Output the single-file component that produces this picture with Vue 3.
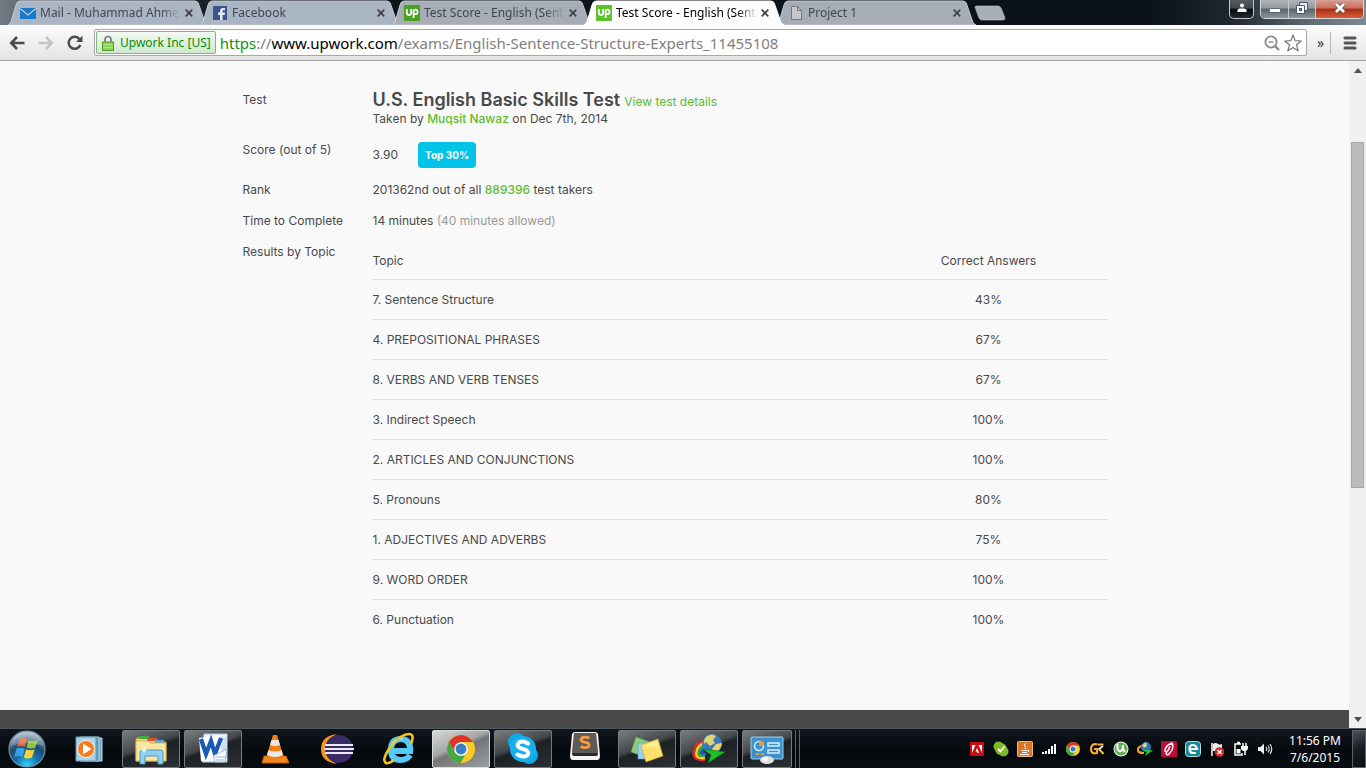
<script setup>
import { ref } from 'vue'

const tabs = [
  { title: 'Mail - Muhammad Ahmer', icon: 'mail', glow: true },
  { title: 'Facebook', icon: 'facebook', glow: true },
  { title: 'Test Score - English (Sent', icon: 'upwork' },
  { title: 'Test Score - English (Sent', icon: 'upwork', active: true },
  { title: 'Project 1', icon: 'page' }
]

const topics = ref([
  { name: '7. Sentence Structure', score: '43%' },
  { name: '4. PREPOSITIONAL PHRASES', score: '67%' },
  { name: '8. VERBS AND VERB TENSES', score: '67%' },
  { name: '3. Indirect Speech', score: '100%' },
  { name: '2. ARTICLES AND CONJUNCTIONS', score: '100%' },
  { name: '5. Pronouns', score: '80%' },
  { name: '1. ADJECTIVES AND ADVERBS', score: '75%' },
  { name: '9. WORD ORDER', score: '100%' },
  { name: '6. Punctuation', score: '100%' }
])
</script>

<template>
  <div class="screen">
    <header class="titlebar">
      <nav class="tabs" aria-label="Open tabs">
        <div v-for="(tab, i) in tabs" :key="i" class="tab" :class="{ active: tab.active, glow: tab.glow }">
          <svg class="tab-shape" viewBox="0 0 200 24" preserveAspectRatio="none" aria-hidden="true">
            <path d="M0 24C3 23 3 21 4 18L8 5Q9 1 13 1H186Q190 1 191 5L196 19Q197 23 200 24Z" />
          </svg>
          <svg v-if="tab.icon === 'mail'" class="favicon" viewBox="0 0 16 16" aria-hidden="true">
            <path fill="#1979ca" d="M0 3H16V14H0Z" /><path fill="none" stroke="#b9cde0" stroke-width="1.3" d="M0 3.5L8 10L16 3.5" />
          </svg>
          <svg v-else-if="tab.icon === 'facebook'" class="favicon" viewBox="0 0 16 16" aria-hidden="true">
            <rect x="1" y="1" width="14" height="14" fill="#3c5390" /><path fill="#e4e9f2" d="M8 15V10H6V7.500H8V6C8 4 9 3 11 3H13V5.300H11.500C10.800 5.300 10.600 5.600 10.600 6.200V7.500H13L12.700 10H10.600V15Z" />
          </svg>
          <svg v-else-if="tab.icon === 'upwork'" class="favicon" viewBox="0 0 16 16" aria-hidden="true">
            <rect width="16" height="16" :fill="tab.active ? '#5cc42b' : '#46a022'" />
            <path fill="none" stroke="#fff" stroke-width="1.800" d="M2.800 4V7.500Q2.800 10 5 10Q7.200 10 7.200 7.500V4M9.600 13V7Q9.600 4.700 11.500 4.700Q13.500 4.700 13.500 7Q13.500 9.200 11.500 9.200H9.600" />
          </svg>
          <svg v-else class="favicon" viewBox="0 0 16 16" aria-hidden="true">
            <path fill="#c6c8cb" stroke="#75787c" d="M3.500 1.500H9.500L13.500 5.500V14.500H3.500Z" /><path fill="none" stroke="#75787c" d="M9.500 1.500V5.500H13.500" />
          </svg>
          <span class="tab-title">{{ tab.title }}</span>
          <button class="tab-close" aria-label="Close tab">
            <svg viewBox="0 0 8 8" width="8" height="8"><path stroke="currentColor" stroke-width="1.800" d="M.7 .7L7.300 7.300M7.300 .7L.7 7.300" /></svg>
          </button>
        </div>
        <button class="new-tab" aria-label="New tab">
          <svg viewBox="0 0 32 16" width="32" height="16"><path fill="#a8afb8" stroke="#c4c9cf" stroke-width=".6" d="M1 2Q1 1 3 1H24Q26 1 27 3L31 13Q31 15 29 15H8Q6 15 5 13Z" /></svg>
        </button>
      </nav>
      <div class="window-tools">
        <button class="wb user" aria-label="User">
          <svg viewBox="0 0 10 10" width="10" height="10"><circle cx="5" cy="2.500" r="2" fill="#fff" /><path fill="#fff" d="M.5 9V7Q.5 5.500 3 5.500H7Q9.500 5.500 9.500 7V9Z" /></svg>
        </button>
        <div class="wb-group">
          <button class="wb min" aria-label="Minimize"><svg viewBox="0 0 12 12" width="12" height="12"><rect x=".5" y="6.500" width="11" height="4" rx="1" fill="#fff" stroke="#5d6370" /></svg></button>
          <button class="wb max" aria-label="Restore"><svg viewBox="0 0 12 12" width="12" height="12"><path fill="#eef0f2" stroke="#50566a" d="M3.500 .5H11.500V8.500H3.500Z" /><path fill="#fff" stroke="#50566a" d="M.5 3.500H8.500V11.500H.5Z" /><rect x="3.500" y="6.500" width="2" height="2" fill="#888" stroke="#50566a" /></svg></button>
          <button class="wb close" aria-label="Close"><svg viewBox="0 0 12 12" width="12" height="12"><path stroke="#5f4444" stroke-width="4.500" d="M2 2L10 10M10 2L2 10" /><path stroke="#fff" stroke-width="2.800" d="M2 2L10 10M10 2L2 10" /></svg></button>
        </div>
      </div>
    </header>

    <div class="toolbar">
      <button class="tool" aria-label="Back"><svg viewBox="0 0 16 14" width="16" height="14"><path fill="none" stroke="#4b4b4b" stroke-width="2.600" d="M8 1L2.200 7L8 13M2 7H15.500" /></svg></button>
      <button class="tool" aria-label="Forward"><svg viewBox="0 0 16 14" width="16" height="14"><path fill="none" stroke="#c4c4c4" stroke-width="2.600" d="M8 1L13.800 7L8 13M14 7H.5" /></svg></button>
      <button class="tool" aria-label="Reload"><svg viewBox="0 0 16 16" width="16" height="16"><path fill="none" stroke="#4b4b4b" stroke-width="2.500" d="M13.300 10A6 6 0 1 1 12.500 4.200" /><path fill="#4b4b4b" d="M15.500 .5V7H9Z" /></svg></button>
      <div class="omnibox">
        <button class="secure">
          <svg viewBox="0 0 12 16" width="12" height="16" aria-hidden="true"><path fill="none" stroke="#777" stroke-width="1.600" d="M3 8V4.500Q3 1.500 6 1.500Q9 1.500 9 4.500V8" /><rect x=".5" y="7" width="11" height="8.500" fill="#8bd556" stroke="#58972f" /><path stroke="#c1ef9c" d="M1.500 9.500H10.500M1.500 12.500H10.500" opacity=".6" /></svg>
          Upwork Inc [US]
        </button>
        <a class="url" href="#"><span class="scheme">https</span>://<span class="host">www.upwork.com</span>/exams/English-Sentence-Structure-Experts_11455108</a>
        <button class="inner-tool" aria-label="Zoom"><svg viewBox="0 0 16 16" width="16" height="16"><circle cx="7" cy="7" r="5.600" fill="none" stroke="#888" stroke-width="1.800" /><path stroke="#888" stroke-width="1.400" d="M4.500 7H9.500" /><path stroke="#888" stroke-width="2.400" d="M11 11L15 15" /></svg></button>
        <button class="inner-tool" aria-label="Bookmark"><svg viewBox="0 0 18 18" width="18" height="18"><path fill="#fff" stroke="#777" stroke-width="1.200" stroke-linejoin="round" d="M9 1L11.200 6.700L17.300 7L12.500 10.800L14.200 16.800L9 13.400L3.800 16.800L5.500 10.800L.7 7L6.800 6.700Z" /></svg></button>
      </div>
      <button class="more" aria-label="More">»</button>
      <button class="menu" aria-label="Menu"><svg viewBox="0 0 14 14" width="14" height="14"><path stroke="#555" stroke-width="3" stroke-linecap="round" d="M2 2H12M2 7H12M2 12H12" /></svg></button>
    </div>

    <div class="viewport">
      <div class="page">
        <main class="result">
          <dl class="facts">
            <dt>Test</dt>
            <dd>
              <div class="title-line"><h1>U.S. English Basic Skills Test</h1> <a href="#">View test details</a></div>
              <div>Taken by <a href="#" class="strong">Muqsit Nawaz</a> on Dec 7th, 2014</div>
            </dd>
            <dt>Score (out of 5)</dt>
            <dd class="score">3.90 <span class="badge">Top 30%</span></dd>
            <dt>Rank</dt>
            <dd>201362nd out of all <span class="green">889396</span> test takers</dd>
            <dt>Time to Complete</dt>
            <dd>14 minutes <span class="muted">(40 minutes allowed)</span></dd>
            <dt>Results by Topic</dt>
            <dd>
              <table>
                <thead><tr><th scope="col">Topic</th><th scope="col" class="num">Correct Answers</th></tr></thead>
                <tbody>
                  <tr v-for="t in topics" :key="t.name"><td>{{ t.name }}</td><td class="num">{{ t.score }}</td></tr>
                </tbody>
              </table>
            </dd>
          </dl>
        </main>
        <footer class="page-footer"></footer>
      </div>
      <div class="scrollbar" aria-hidden="true">
        <svg viewBox="0 0 8 5" width="8" height="5"><path fill="#505050" d="M0 5L4 0L8 5Z" /></svg>
        <div class="track"><div class="thumb"></div></div>
        <svg viewBox="0 0 8 5" width="8" height="5"><path fill="#505050" d="M0 0L4 5L8 0Z" /></svg>
      </div>
    </div>

    <footer class="taskbar">
      <button class="start" aria-label="Start">
        <svg viewBox="0 0 40 40" width="40" height="40">
          <defs>
            <radialGradient id="orb" cx=".5" cy=".95" r=".9"><stop offset="0" stop-color="#35d6fb" /><stop offset=".35" stop-color="#1474ae" /><stop offset=".65" stop-color="#1c4a70" /><stop offset="1" stop-color="#a5b9c6" /></radialGradient>
          </defs>
          <circle cx="20" cy="20" r="18" fill="url(#orb)" stroke="#6d8ea3" stroke-width="1.200" />
          <path fill="#ea6432" d="M13 10Q17 8 20 10L18 18Q14 16 10 18Z" /><path fill="#8fc43c" d="M21.500 11Q26 13 31 11L28 19Q24 20 19.500 18.500Z" />
          <path fill="#3b9fe0" d="M9.500 19.500Q14 18 17.600 20L15.500 28Q11 26 7.500 28Z" /><path fill="#fbd039" d="M19 20.500Q24 22 27.600 20.500L25 28.500Q20 30.500 16.800 28.500Z" />
          <path fill="#fff" opacity=".2" d="M4 17Q6 3 20 3Q34 3 36 17Q20 11 4 17Z" />
        </svg>
      </button>
      <button class="task" aria-label="Media Player">
        <svg viewBox="0 0 32 32" width="32" height="32"><path fill="#78abc9" stroke="#b4d9eb" d="M10 5H29V28H10Z" /><path fill="#6497b9" stroke="#a9d2e5" d="M7 4H26V28H7Z" /><path fill="#a8d3e8" stroke="#6698b5" d="M3 4H23V28H3Z" /><circle cx="13" cy="16" r="8.500" fill="#f5791d" stroke="#fff1df" /><path fill="#fff" d="M10 10.500L18.500 16L10 21.500Z" /></svg>
      </button>
      <button class="task open" aria-label="Explorer">
        <svg viewBox="0 0 34 34" width="34" height="34"><path fill="#f1d375" stroke="#b59137" d="M2 6H12L14 8H24L25 10H32V29H2Z" /><path fill="#3eae3d" d="M5 4H15V7H5Z" /><path fill="#d85335" d="M13 6H23V9H13Z" /><path fill="#4ca8e4" d="M21 8H30V11H21Z" /><path fill="#f8e7a2" stroke="#d7b75b" d="M2 9H14L16 11H32V29H2Z" /><path fill="#8ed0ed" stroke="#4b99c3" d="M6 20Q6 18 9 18H26Q29 18 29 20V32H24V24H11V32H6Z" /><path fill="#fff" d="M10 14L10.800 17.200L14 18L10.800 18.800L10 22L9.200 18.800L6 18L9.200 17.200Z" /></svg>
      </button>
      <button class="task open" aria-label="Word">
        <svg viewBox="0 0 34 34" width="34" height="34"><path fill="#ecf3fb" stroke="#b5cbe5" d="M8 2H31V30H6Z" /><path fill="#cfe0f2" d="M24 5H30V20H24Z" /><path fill="#fff" d="M3 6L25 3V28L5 29Z" /><path fill="none" stroke="#185ab4" stroke-width="4.200" d="M5 7L10 22L15 9L19 22L25 6" /><path fill="#f7faff" stroke="#9fb7d3" d="M17 24L31 17L29 30H19Z" /><path fill="none" stroke="#9fb7d3" d="M19 25H29M20 28H28" /></svg>
      </button>
      <button class="task" aria-label="VLC">
        <svg viewBox="0 0 32 32" width="32" height="32"><path fill="#f28a1b" stroke="#bd5b07" d="M5 23H27L30 30H3Z" /><path fill="#f47d12" d="M14 2H18L25 25Q16 29 7 25Z" /><path fill="#e9e9e9" d="M12.500 7H19.500L21 12Q16 14 11 12ZM9.500 17Q16 20 22.500 17L24 22Q16 26 8 22Z" /></svg>
      </button>
      <button class="task" aria-label="Eclipse">
        <svg viewBox="0 0 34 32" width="34" height="32"><path fill="#f7941e" d="M17 1Q1 3 1 16Q1 29 17 31Q6 26 6 16Q6 6 17 1Z" /><circle cx="19" cy="16" r="14" fill="#382b66" /><path fill="none" stroke="#e9e8f5" stroke-width="2.200" d="M5 12H33M4 16H34M5 20H33" /></svg>
      </button>
      <button class="task" aria-label="Internet Explorer">
        <svg viewBox="0 0 34 34" width="34" height="34"><path fill="none" stroke="#55c8f5" stroke-width="6" d="M31 19H11M28.500 19Q28 7 19 7Q9 7 9 18Q9 28 19 28Q25 28 28 23" /><path fill="none" stroke="#b7eefe" stroke-width="1.400" d="M10 12Q13 6 21 7" /><path fill="none" stroke="#f4c51a" stroke-width="2.600" d="M29 12Q33 2 27 2Q19 2 9 14Q-1 28 4 31Q7 32 12 28" /></svg>
      </button>
      <button class="task open current" aria-label="Chrome">
        <svg viewBox="0 0 32 32" width="32" height="32"><circle cx="16" cy="16" r="14" fill="#f9cb27" /><path fill="#d9372a" d="M3.900 9A14 14 0 0 1 28.100 9H16L10 19Z" /><path fill="#45a644" d="M3.900 9L10 19.500Q13 24 20 22.500L15.500 30A14 14 0 0 1 3.900 9Z" /><circle cx="16" cy="16" r="6.800" fill="#f2f4f5" /><circle cx="16" cy="16" r="5.400" fill="#377fc8" /></svg>
      </button>
      <button class="task open" aria-label="Skype">
        <svg viewBox="0 0 32 32" width="32" height="32"><circle cx="10" cy="9" r="9" fill="#0ea9e6" /><circle cx="22" cy="22" r="9" fill="#0ea9e6" /><circle cx="16" cy="16" r="13" fill="#16b1ec" /><path fill="none" stroke="#fff" stroke-width="4" stroke-linecap="round" d="M21 10.500Q16 7 12 9.500Q9 13 13 15L19 17Q23 20 20 22.500Q16 25 10.500 21.500" /></svg>
      </button>
      <button class="task" aria-label="Sublime Text">
        <svg class="sublime" viewBox="0 0 32 30" width="32" height="30"><path fill="#f3f3f3" d="M3 2Q4 0 6 0H26Q28 0 29 2L31 24Q31 28 28 28H4Q1 28 1 24Z" /><path fill="#2a2a2a" d="M4 18H28L29 22Q29 24 27 24H5Q3 24 3 22Z" /><path fill="#5d5a58" d="M5 1H27L29 19Q29 21 27 21H5Q3 21 3 19Z" /><path fill="none" stroke="#f89b41" stroke-width="2.800" d="M20.500 6Q13 3.500 12 7.500Q12 9.500 16 10.300Q21 11 20 14Q18 17 11.500 14.500" /></svg>
      </button>
      <button class="task open" aria-label="Sticky Notes">
        <svg viewBox="0 0 34 30" width="34" height="30"><path fill="#8dcc7d" stroke="#579a54" stroke-width=".6" d="M6 3L20 8L15 23L1 18Z" /><path fill="#9ccff1" stroke="#5b98c5" stroke-width=".6" d="M8 9H22V25H8Z" /><path fill="#fbe36b" stroke="#c7a737" stroke-width=".6" d="M11 11L28 5L33 22L16 28Z" /><path fill="#fff3a8" d="M13 12L27 7L29 13Z" opacity=".7" /></svg>
      </button>
      <button class="task open" aria-label="Download Manager">
        <svg viewBox="0 0 36 34" width="36" height="34"><g fill="none" stroke-width="2.600"><path stroke="#e4252a" d="M14 28Q1 29 3 19Q5 10 14 9" /><path stroke="#f5d32a" d="M14 26Q4 27 5.500 20Q7 12 15 11" /><path stroke="#2bac40" d="M14 24Q7 24 8 20Q9 15 16 13" /><path stroke="#225cd8" d="M15 22Q10 22 11 19L16 15" /></g><circle cx="21" cy="12" r="10" fill="#3978c1" /><path fill="#e3d36c" d="M16 4Q21 1 25 4L22 8L24 11L19 14L15 10L13 12Q12 8 16 4ZM25 12L31 11Q30 18 24 21L21 17Z" /><path fill="#1cc02b" stroke="#0a7213" stroke-width=".7" d="M12 17L34 20L17 31L20 23Z" /></svg>
      </button>
      <button class="task open stacked" aria-label="Control Panel">
        <svg viewBox="0 0 34 32" width="34" height="32"><rect x="1" y="4" width="32" height="22" rx="1" fill="#3c91cf" stroke="#a1d0ee" /><circle cx="9" cy="13" r="4.500" fill="none" stroke="#d6effd" stroke-width="1.500" /><path fill="#f59a29" d="M9 7Q14 7 14 13H9Z" /><path fill="none" stroke="#d6effd" stroke-width="1.500" d="M18 10H29V13H18ZM18 17H29V20H18Z" /><path fill="#f59a29" d="M6 20H9V22H6ZM11 20H14V22H11Z" /><ellipse cx="17" cy="27" rx="7" ry="4" fill="#dedfe0" /><ellipse cx="15" cy="26" rx="3" ry="2" fill="#fff" /></svg>
      </button>
      <span class="edge"></span><span class="edge"></span>

      <div class="tray">
        <svg viewBox="0 0 16 16"><rect x="1" y="1" width="14" height="14" fill="#c80d12" /><path fill="#fff" d="M3 4H6.500L3 12ZM9.500 4H13V12ZM8 7L10.200 12H8.700L8 10.500H6.500Z" /></svg>
        <svg viewBox="0 0 16 16"><circle cx="5.500" cy="5.500" r="5" fill="#7dba24" /><circle cx="10.500" cy="10.500" r="5" fill="#7dba24" /><circle cx="8" cy="8" r="6" fill="#7dba24" /><path fill="none" stroke="#fff" stroke-width="1.800" d="M5 8L7.500 10.500L11.500 5.500" /></svg>
        <svg viewBox="0 0 16 16"><rect x=".5" y=".5" width="15" height="15" rx="1" fill="#dd7421" stroke="#f6b87b" /><path fill="none" stroke="#fff" d="M9 2Q6 4 8 5.500Q9 6.500 8 8M4.500 9.500H10.500M11 9Q13 9.500 11 11M5 11.500H10M3 13.500H12" /></svg>
        <svg viewBox="0 0 16 16"><path stroke="#fff" stroke-width="2" d="M2 13V11M5 13V10M8 13V8M11 13V5M14 13V3" /></svg>
        <svg viewBox="0 0 32 32"><circle cx="16" cy="16" r="14" fill="#f9cb27" /><path fill="#d9372a" d="M3.900 9A14 14 0 0 1 28.100 9H16L10 19Z" /><path fill="#45a644" d="M3.900 9L10 19.500Q13 24 20 22.500L15.500 30A14 14 0 0 1 3.900 9Z" /><circle cx="16" cy="16" r="7" fill="#f2f4f5" /><circle cx="16" cy="16" r="5" fill="#377fc8" /></svg>
        <svg viewBox="0 0 16 16"><rect width="16" height="16" fill="#050505" /><path fill="none" stroke="#f2ad2c" stroke-width="2.200" d="M8.500 3.500Q2 2 2 8Q2 13.500 8 12V8H5" /><path fill="none" stroke="#f4b948" stroke-width="2" d="M9 3.500H14.500M10 8L14.500 13" /><path stroke="#f4f4f4" stroke-width="1.600" d="M14 5L9.500 8.500" /></svg>
        <svg viewBox="0 0 16 16"><circle cx="8" cy="8" r="7.500" fill="#edf7eb" /><circle cx="8" cy="8" r="6.500" fill="#63ae52" /><path fill="none" stroke="#fff" stroke-width="2" d="M4.500 3V7Q5 11 8 10Q10 9 10 4M10 8L12 11" /></svg>
        <svg viewBox="0 0 16 16"><path fill="none" stroke="#f1a023" stroke-width="2.200" d="M7 12Q0 12 1 8Q2 5 6 5" /><circle cx="9" cy="6" r="5" fill="#2e72b9" /><path fill="#e0d368" d="M5 4L9 1L10 5L7 7Z" /><path fill="#1fbf31" d="M5 8L16 9.500L8 15L9.500 11Z" /></svg>
        <svg viewBox="0 0 16 16"><rect width="16" height="16" rx="1" fill="#bf0b39" /><path fill="none" stroke="#fff" stroke-width="1.500" d="M4 11Q4 4 11 2Q14 7 8 13Q6 15 5 12Q8 9 9 5" /></svg>
        <svg viewBox="0 0 16 16"><rect x=".5" y=".5" width="15" height="15" rx="3" fill="#17899b" stroke="#b3d7dc" /><path fill="none" stroke="#fff" stroke-width="2.200" d="M4.500 8H12Q11 4 8 4Q4.500 4 4.500 8Q5 12 8 12H11" /></svg>
        <svg viewBox="0 0 16 16"><path stroke="#fff" stroke-width="1.500" d="M3 2V15" /><path fill="#eee" d="M4 3Q7 1 9 3Q11 4 13 3V10H4Z" /><circle cx="10.500" cy="11" r="4.800" fill="#d62a27" /><path stroke="#fff" stroke-width="1.500" d="M8.500 9L12.500 13M12.500 9L8.500 13" /></svg>
        <svg viewBox="0 0 16 16"><path fill="none" stroke="#fff" stroke-width="1.500" d="M8 3H2V14H9V12M4 1.500H7M10 2V5M13 2V5M12 9V14" /><path fill="#fff" d="M8 5H15V8L13 10H10L8 8ZM3.500 8H7.500V12.500H3.500Z" /></svg>
        <svg viewBox="0 0 16 16"><path fill="#eee" d="M1 6H3.500L7 2.500V13.500L3.500 10H1Z" /><path fill="none" stroke="#eee" stroke-width="1.100" d="M9 6Q10.500 8 9 10M11 4.500Q13.500 8 11 11.500M13 3Q16.500 8 13 13" /></svg>
      </div>
      <time class="clock"><span>11:56 PM</span><span>7/6/2015</span></time>
      <button class="show-desktop" aria-label="Show desktop"></button>
    </footer>
  </div>
</template>

<style>
body { margin: 0; }
</style>

<style scoped>
.screen {
  display: flex;
  flex-direction: column;
  min-height: 100vh;
  font-family: "Noto Sans", "Open Sans", sans-serif;
  font-size: 12px;
  background: #f9f9f9;
}
.screen * { box-sizing: border-box; }
button { padding: 0; border: 0; background: none; font: inherit; color: inherit; }
svg { display: block; flex: none; }

.titlebar {
  display: flex;
  justify-content: space-between;
  height: 25px;
  background: linear-gradient(90deg, #717b83 0, #68727a 12px, #0d141c 230px, #0b1219 84%, #1d262e 90%, #606b73 96%, #7c8a95);
}
.tabs { display: flex; min-width: 0; padding-left: 8px; }
.tab {
  position: relative;
  display: flex;
  align-items: center;
  width: 200px;
  height: 25px;
  margin-right: -8px;
  padding: 1px 11px 0 12px;
  color: #42464c;
}
.tab-shape { position: absolute; inset: 0; width: 100%; height: 100%; fill: #a6adb6; stroke: #c5cad0; stroke-width: 1; }
.glow .tab-shape { fill: #a9b5c3; }
.active { z-index: 1; color: #000; }
.active .tab-shape { fill: #fcfcfc; stroke: #fcfcfc; }
.favicon { position: relative; width: 16px; height: 16px; }
.tab-title {
  position: relative;
  flex: 1;
  margin-left: 4px;
  overflow: hidden;
  white-space: nowrap;
  line-height: 18px;
  mask-image: linear-gradient(90deg, #000 calc(100% - 20px), transparent);
}
.tab-close { position: relative; padding: 4px; color: #404347; }
.new-tab { align-self: center; margin-left: 6px; }
.window-tools { display: flex; gap: 6px; padding-right: 2px; }
.wb-group { display: flex; border: 1px solid #d5dadd; border-top: 0; border-radius: 0 0 5px 5px; overflow: hidden; height: 19px; }
.wb { display: flex; align-items: center; justify-content: center; height: 18px; padding-bottom: 2px; background: linear-gradient(#9ba0a5 0, #757b81 45%, #2a3037 50%, #5b646c); }
.user { width: 25px; height: 19px; border: 1px solid #c2c6ca; border-top: 0; border-radius: 0 0 5px 5px; background: linear-gradient(#555a60 0, #42474d 45%, #070b10 50%, #22282e); }
.min, .max { width: 28px; border-right: 1px solid #c6ccd0; background: linear-gradient(#b0b4b8 0, #92989e 45%, #59636c 50%, #8996a0); }
.max { width: 27px; }
.close { width: 47px; background: linear-gradient(#d7a094 0, #c66f5d 45%, #a92e19 50%, #d85e38); }

.toolbar {
  display: flex;
  align-items: center;
  height: 36px;
  padding: 0 9px;
  border-bottom: 1px solid #a3a3a3;
  background: linear-gradient(#fcfcfc, #e4e4e4);
}
.tool { width: 16px; margin-right: 13px; }
.tool + .tool + .tool { margin-right: 11px; }
.omnibox {
  display: flex;
  flex: 1;
  align-items: center;
  min-width: 0;
  height: 27px;
  padding: 0 4px 0 1px;
  border: 1px solid #a8a8a8;
  border-radius: 2px;
  background: #fff;
}
.secure {
  display: flex;
  align-items: center;
  gap: 6px;
  height: 23px;
  padding: 0 4px 0 5px;
  border: 1px solid #7cbb7c;
  border-radius: 2px;
  background: linear-gradient(#f3faf3, #cde8cd);
  color: #0a8a0a;
  white-space: nowrap;
}
.url { flex: 1; min-width: 0; margin-left: 4px; overflow: hidden; white-space: nowrap; font-size: 15px; line-height: 22px; color: #808080; text-decoration: none; }
.scheme { color: #0b9412; }
.host { color: #000; }
.inner-tool { margin-left: 4px; }
.more { width: 20px; height: 22px; margin-left: 4px; border-right: 1px solid #b5b5b5; font-size: 14px; line-height: 18px; color: #333; }
.menu { margin-left: 12px; }

.viewport { display: flex; flex: 1; }
.page { display: flex; flex: 1; flex-direction: column; min-width: 0; }
.result {
  flex: 1;
  width: 100%;
  max-width: 864px;
  margin: 0 auto;
  padding: 30px 0;
  font-family: Inter, "Liberation Sans", sans-serif;
  font-size: 12px;
  line-height: 18px;
  color: #494949;
}
.facts { display: grid; grid-template-columns: 130px 1fr; row-gap: 13px; margin: 0; }
dt, dd { margin: 0; }
.title-line { display: flex; align-items: baseline; gap: 4px; height: 19px; }
h1 { margin: 0; font-size: 18px; font-weight: 600; line-height: 18px; }
.result a { color: #5bbc2e; text-decoration: none; }
.result .strong { font-weight: 500; }
.green { color: #5bbc2e; font-weight: 500; }
.muted { color: #999; }
.score { display: flex; align-items: center; gap: 20px; }
.badge { margin-top: 1px; padding: 0 7px; border-radius: 4px; background: #00c3e8; color: #fff; font-size: 10px; font-weight: 700; line-height: 26px; }
table { width: 100%; border-collapse: collapse; }
th, td { height: 40px; padding: 1px 0 0; border-bottom: 1px solid #e0e0e0; font-weight: 400; text-align: left; }
th { height: 36px; }
tbody tr:last-child td { border-bottom: 0; }
.num { width: 236px; text-align: center; }
.page-footer { height: 18px; background: #494949; }

.scrollbar { display: flex; flex-direction: column; align-items: center; width: 17px; padding: 7px 0 6px; background: #f0f0f0; }
.track { flex: 1; width: 13px; padding-top: 69px; }
.thumb { height: 346px; border: 1px solid #a6a6a6; background: #bcbcbc; }

.taskbar {
  display: flex;
  align-items: center;
  gap: 4px;
  height: 40px;
  border-top: 1px solid #4d565d;
  background: linear-gradient(#10161d, #05090d 60%, #080d12);
}
.start { display: flex; justify-content: center; width: 56px; padding-right: 2px; }
.task { display: flex; align-items: center; justify-content: center; width: 58px; height: 38px; border: 1px solid transparent; border-radius: 2px; }
.open { border-color: #777b7e; background: linear-gradient(160deg, #7b7d7f 0, #44484b 42%, #1c2125 50%, #2c3034); }
.current { border-color: #dcdcdc; background: linear-gradient(155deg, #d9d9d9 0, #a3a5a6 42%, #737577 50%, #9b9d9e); }
.sublime { margin-bottom: 4px; }
.stacked { width: 50px; }
.edge { width: 2px; height: 38px; margin-left: -2px; border-right: 1px solid #60666a; }
.tray { display: flex; gap: 8px; margin-left: auto; }
.tray svg { width: 16px; height: 16px; }
.clock { display: flex; flex-direction: column; width: 66px; margin-left: 5px; color: #fff; line-height: 17px; text-align: center; }
.show-desktop { width: 14px; height: 38px; border: 1px solid #5c6267; background: linear-gradient(155deg, #4d5358, #171c21 50%, #0c1014); }
</style>
